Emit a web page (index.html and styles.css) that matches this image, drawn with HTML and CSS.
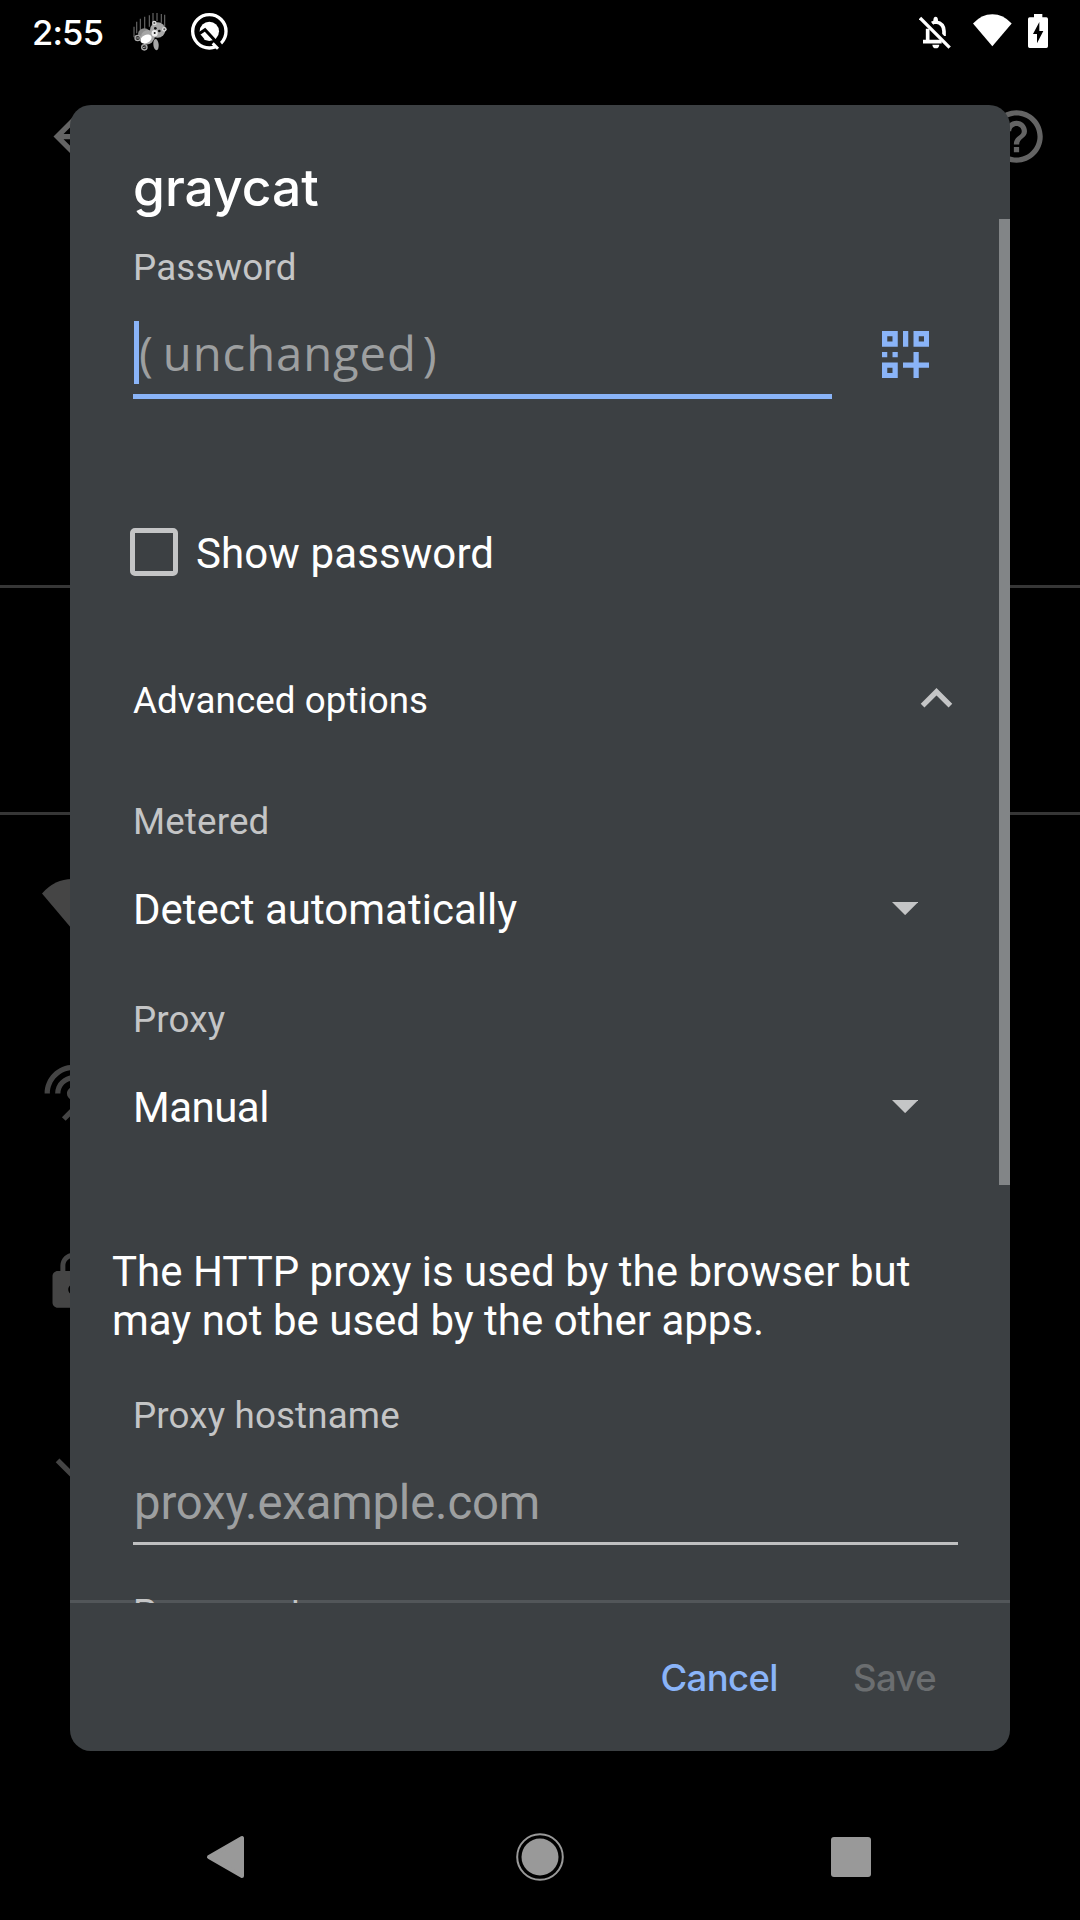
FILE: index.html
```html
<!DOCTYPE html>
<html lang="en">
<head>
<meta charset="utf-8">
<title>graycat</title>
<link rel="stylesheet" href="styles.css">
</head>
<body>
<div class="screen">
  <header class="status">
    <span class="clock">2:55</span>
    <svg class="bear" viewBox="400 34 104 118">
      <path stroke="#666" stroke-width="3.5" fill="none" d="M403 78v32M411 63v35M422 54v34M435 48v36M449 44v34M460 37v28M472 37v24M485 40v26M495 42v36"/>
      <ellipse cx="434" cy="100" rx="19" ry="17" fill="#8c8c8c"/>
      <path fill="#a6a6a6" d="M424 108q2-20 24-20l20 12q-2 16-12 26-10 8-22 4-10-8-10-22z"/>
      <ellipse cx="469" cy="132" rx="8" ry="17" fill="#a6a6a6" transform="rotate(-6 469 132)"/>
      <circle cx="474" cy="88" r="23" fill="#a8a8a8"/>
      <circle cx="464" cy="67" r="7" fill="#ddd"/><circle cx="494" cy="86" r="7" fill="#ddd"/>
      <circle cx="464" cy="67" r="3" fill="#555"/><circle cx="494" cy="86" r="3" fill="#555"/>
      <ellipse cx="465" cy="98" rx="9" ry="10" fill="#eee"/>
      <circle cx="467" cy="83" r="4" fill="#111"/><circle cx="479" cy="91" r="4" fill="#111"/><circle cx="465" cy="97" r="3" fill="#111"/>
      <ellipse cx="439" cy="115" rx="18" ry="12" fill="#fff" transform="rotate(-28 439 115)"/>
      <circle cx="414" cy="112" r="8" fill="#222" stroke="#aaa" stroke-width="4"/>
      <circle cx="434" cy="140" r="8" fill="#222" stroke="#aaa" stroke-width="4"/>
      <path stroke="#aaa" stroke-width="3" d="M410 112h8M430 141l8-2"/>
    </svg>
    <svg class="beta" viewBox="570 36 116 116">
      <circle cx="628" cy="94" r="50" fill="none" stroke="#fff" stroke-width="10"/>
      <circle cx="628" cy="94" r="29" fill="#fff"/>
      <path d="M595 103l20-14 48 52" fill="none" stroke="#000" stroke-width="9"/>
      <path d="M595 103l-2 10 8 12 12-8-10-12z" fill="#000"/>
      <path d="M606 108l9-8 30 30" fill="none" stroke="#fff" stroke-width="0"/>
      <path d="M644 133l14-10 12 16-10 10z" fill="#000"/>
      <path d="M638 130l16 16" fill="none" stroke="#fff" stroke-width="9"/>
    </svg>
    <span class="spacer"></span>
    <svg class="bell" viewBox="0 0 96 99">
      <path d="M26 38v38M12 77h56M75 60V46q0-24-24-28q-6 0-12 4" fill="none" stroke="#fff" stroke-width="11"/>
      <path d="M43 14q0-12 7-12t7 12v8H43zM40 86h21q-1 11-10.500 11t-10.500-11z" fill="#fff"/>
      <path d="M12 1l90 90" stroke="#000" stroke-width="7"/>
      <path d="M3 6l89 89" stroke="#fff" stroke-width="10"/>
    </svg>
    <svg class="wifi" viewBox="0 0 60 50"><path fill="#fff" d="M30 50L0 14.4Q13 0 30 0t30 14.4z"/></svg>
    <svg class="battery" viewBox="0 0 60 102"><path fill="#fff" fill-rule="evenodd" d="M18 0h25v10h12q5 0 5 5v82q0 5-5 5H5q-5 0-5-5V15q0-5 5-5h13zM34 24L15 60h12v28l19-37H34z"/></svg>
  </header>

  <main class="settings">
    <div class="appbar">
      <svg class="ic" viewBox="0 0 24 24"><path d="M20 11H7.83l5.59-5.59L12 4l-8 8 8 8 1.41-1.41L7.83 13H20v-2z"/></svg>
      <svg class="ic" viewBox="0 0 24 24"><path d="M11 18h2v-2h-2v2zm1-16C6.48 2 2 6.48 2 12s4.48 10 10 10 10-4.48 10-10S17.52 2 12 2zm0 18c-4.41 0-8-3.59-8-8s3.59-8 8-8 8 3.59 8 8-3.59 8-8 8zm0-14c-2.21 0-4 1.79-4 4h2c0-1.1.9-2 2-2s2 .9 2 2c0 2-3 1.75-3 5h2c0-2.25 3-2.5 3-5 0-2.21-1.79-4-4-4z"/></svg>
    </div>
    <div class="summary"></div>
    <div class="actions"></div>
    <div class="details">
      <svg class="ic signal" viewBox="0 0 60 50"><path d="M30 50L0 14.4Q13 0 30 0t30 14.4z"/></svg>
      <svg class="ic antenna" viewBox="0 0 24 24"><path d="M12 5c-3.87 0-7 3.13-7 7h2c0-2.76 2.24-5 5-5s5 2.24 5 5h2c0-3.87-3.13-7-7-7zm1 9.29c.88-.39 1.5-1.26 1.5-2.29 0-1.38-1.12-2.5-2.5-2.5S9.5 10.62 9.5 12c0 1.02.62 1.9 1.5 2.29v3.3L7.59 21 9 22.41l3-3 3 3L16.41 21 13 17.59v-3.3zM12 1C5.93 1 1 5.93 1 12h2c0-4.97 4.03-9 9-9s9 4.03 9 9h2c0-6.07-4.93-11-11-11z"/></svg>
      <svg class="ic lock" viewBox="0 0 24 24"><path d="M18 8h-1V6c0-2.76-2.24-5-5-5S7 3.240 7 6v2H6c-1.100 0-2 .9-2 2v10c0 1.100.9 2 2 2h12c1.100 0 2-.9 2-2V10c0-1.100-.9-2-2-2zm-6 9c-1.100 0-2-.9-2-2s.9-2 2-2 2 .9 2 2-.9 2-2 2zM8.900 8V6c0-1.710 1.390-3.100 3.100-3.100s3.100 1.390 3.100 3.100v2z"/></svg>
      <svg class="ic more" viewBox="0 0 24 24"><path d="M16.590 8.590L12 13.170 7.410 8.590 6 10l6 6 6-6z"/></svg>
    </div>
  </main>

  <nav class="nav">
    <svg class="back" viewBox="0 0 48 48"><path d="M40 5v38L7 24z" fill="#999" stroke="#999" stroke-width="4" stroke-linejoin="round"/></svg>
    <svg viewBox="0 0 48 48"><circle cx="24" cy="24" r="18.500" fill="#999"/><circle cx="24" cy="24" r="22.800" fill="none" stroke="#999" stroke-width="2"/></svg>
    <svg viewBox="0 0 48 48"><rect x="4" y="4" width="40" height="40" rx="3" fill="#999"/></svg>
  </nav>

  <section class="dialog">
    <h1 class="title">graycat</h1>
    <div class="scroll">
      <div class="label">Password</div>
      <div class="password-row">
        <div class="password-input"><i class="cursor"></i><span class="hint-mono"><span class="open">(</span>unchanged<span class="close">)</span></span></div>
        <svg class="qr" viewBox="0 0 9 9"><path fill-rule="evenodd" d="M0 0h3v3H0zM1 1v1h1V1zM4 0h1v3H4zM6 0h3v3H6zM7 1v1h1V1zM0 4h1v1H0zM2 4h1v1H2zM0 6h3v3H0zM1 7v1h1V7zM6 4h1v2h2v1H7v2H6V7H4V6h2z"/></svg>
      </div>
      <div class="check-row"><span class="box"></span><span class="text">Show password</span></div>
      <div class="advanced"><span>Advanced options</span><svg viewBox="0 0 24 24"><path d="M12 8l-6 6 1.410 1.410L12 10.830l4.590 4.580L18 14z"/></svg></div>
      <div class="label metered">Metered</div>
      <div class="select"><span>Detect automatically</span><svg viewBox="0 0 10 5"><path d="M0 0l5 5 5-5z"/></svg></div>
      <div class="label proxy">Proxy</div>
      <div class="select"><span class="manual">Manual</span><svg viewBox="0 0 10 5"><path d="M0 0l5 5 5-5z"/></svg></div>
      <p class="note">The HTTP proxy is used by the browser but<br>may not be used by the other apps.</p>
      <div class="label host">Proxy hostname</div>
      <div class="host-input">proxy.example.com</div>
      <div class="label port">Proxy port</div>
      <div class="scrollbar"></div>
    </div>
    <footer class="buttons"><span class="cancel">Cancel</span><span class="save">Save</span></footer>
  </section>
</div>
</body>
</html>
```
FILE: styles.css
```css
* { box-sizing: border-box; }
body { margin: 0; background: #000; font-family: Roboto, "Liberation Sans", sans-serif; }
svg { display: block; flex: none; }

.screen { position: relative; width: 1080px; height: 1920px; overflow: hidden; display: flex; flex-direction: column; }

.status { display: flex; align-items: flex-start; height: 63px; padding: 0 32px; }
.clock { width: 101px; padding-top: 11px; font: 500 34.500px/44px Inter, sans-serif; letter-spacing: -0.800px; color: #fff; }
.bear { width: 34.700px; height: 39.300px; margin-top: 11.500px; }
.beta { width: 38.700px; height: 38.700px; margin: 12px 0 0 22.300px; }
.spacer { flex: 1; }
.bell { width: 32px; height: 33px; margin-top: 16px; }
.wifi { width: 38.700px; height: 32.500px; margin: 14px 0 0 22.500px; }
.battery { width: 20px; height: 34px; margin: 14px 0 0 16px; }

.settings { flex: 1; display: flex; flex-direction: column; }
.appbar { height: 147px; display: flex; justify-content: space-between; padding: 41.500px 32px 0 42.500px; }
.ic { width: 63px; height: 63px; }
.appbar .ic { fill: #646464; }
.summary { height: 378px; border-bottom: 3px solid #363636; }
.summary + .actions { height: 227px; border-bottom: 3px solid #363636; }
.details { flex: 1; padding: 64px 0 0 42px; fill: #454545; }
.details .signal { width: 60px; height: 50px; }
.antenna { margin-top: 133px; }
.lock { margin-top: 125px; }
.more { margin: 123px 0 0 -1.700px; }

.nav { display: flex; justify-content: space-between; height: 126px; padding: 39px 205px 0 202px; }
.nav svg { width: 48px; height: 48px; }
.nav .back { margin-right: 3px; }

.dialog { position: absolute; left: 70px; top: 105px; width: 940px; height: 1646px; border-radius: 21px; background: #3c4043; overflow: hidden; display: flex; flex-direction: column; color: #fff; }
.title { margin: 0; height: 114px; padding: 50px 0 0 63px; font: 500 51.500px/64px Inter, sans-serif; letter-spacing: 0; }

.scroll { position: relative; height: 1384px; padding: 27px 0 0 63px; overflow: hidden; box-shadow: inset 0 -3px #525659; }
.label { font-size: 36.750px; line-height: 44px; letter-spacing: 0.150px; color: #c4c5c6; }
.password-row { display: flex; align-items: flex-start; height: 109px; }
.password-input { display: flex; width: 699px; height: 109px; padding: 31px 0 0 1px; border-bottom: 5px solid #8ab4f8; }
.cursor { width: 5px; height: 63px; background: #8ab4f8; }
.hint-mono { font: 47.250px/63px "Open Sans", sans-serif; letter-spacing: 0.900px; color: #9d9fa0; white-space: nowrap; }
.open { margin-right: 9px; }
.close { margin-left: 6px; }
.qr { width: 47.250px; height: 47.250px; margin: 41px 0 0 50px; fill: #8ab4f8; }
.check-row { display: flex; height: 50px; margin: 129px 0 0 -3px; }
.box { width: 48px; height: 48px; border: 5.250px solid #c4c5c6; border-radius: 5px; }
.text { margin: 1px 0 0 18px; font-size: 42px; line-height: 49px; letter-spacing: 0.100px; }
.advanced { display: flex; justify-content: space-between; align-items: center; height: 63px; margin: 89px 42px 0 0; font-size: 36.750px; line-height: 44px; letter-spacing: 0.080px; }
.advanced span { padding-top: 4px; }
.advanced svg { width: 63px; height: 63px; fill: #c4c5c6; }
.metered { margin-top: 70px; }
.select { display: flex; justify-content: space-between; align-items: center; height: 49px; margin: 41px 92px 0 0; font-size: 42px; line-height: 49px; }
.select svg { width: 26.250px; height: 13.130px; margin-bottom: 2px; fill: #c4c5c6; }
.manual { letter-spacing: -0.500px; }
.proxy { margin-top: 64px; }
.note { margin: 115px 0 0 -21px; font-size: 42px; line-height: 49px; white-space: nowrap; }
.host { margin-top: 49px; }
.host-input { width: 825px; height: 107px; padding: 37px 0 0 1px; font-size: 47.250px; line-height: 56px; letter-spacing: -0.150px; color: #9d9fa0; border-bottom: 3px solid #bfc0c1; }
.port { margin-top: 46px; }
.scrollbar { position: absolute; top: 0; right: 0; width: 11px; height: 966px; background: #828587; }

.buttons { display: flex; justify-content: flex-end; gap: 75px; padding: 51px 74px 0 0; font: 500 36.500px/48px Inter, sans-serif; letter-spacing: -0.600px; }
.cancel { color: #8ab4f8; }
.save { color: #6b6e70; }
```
